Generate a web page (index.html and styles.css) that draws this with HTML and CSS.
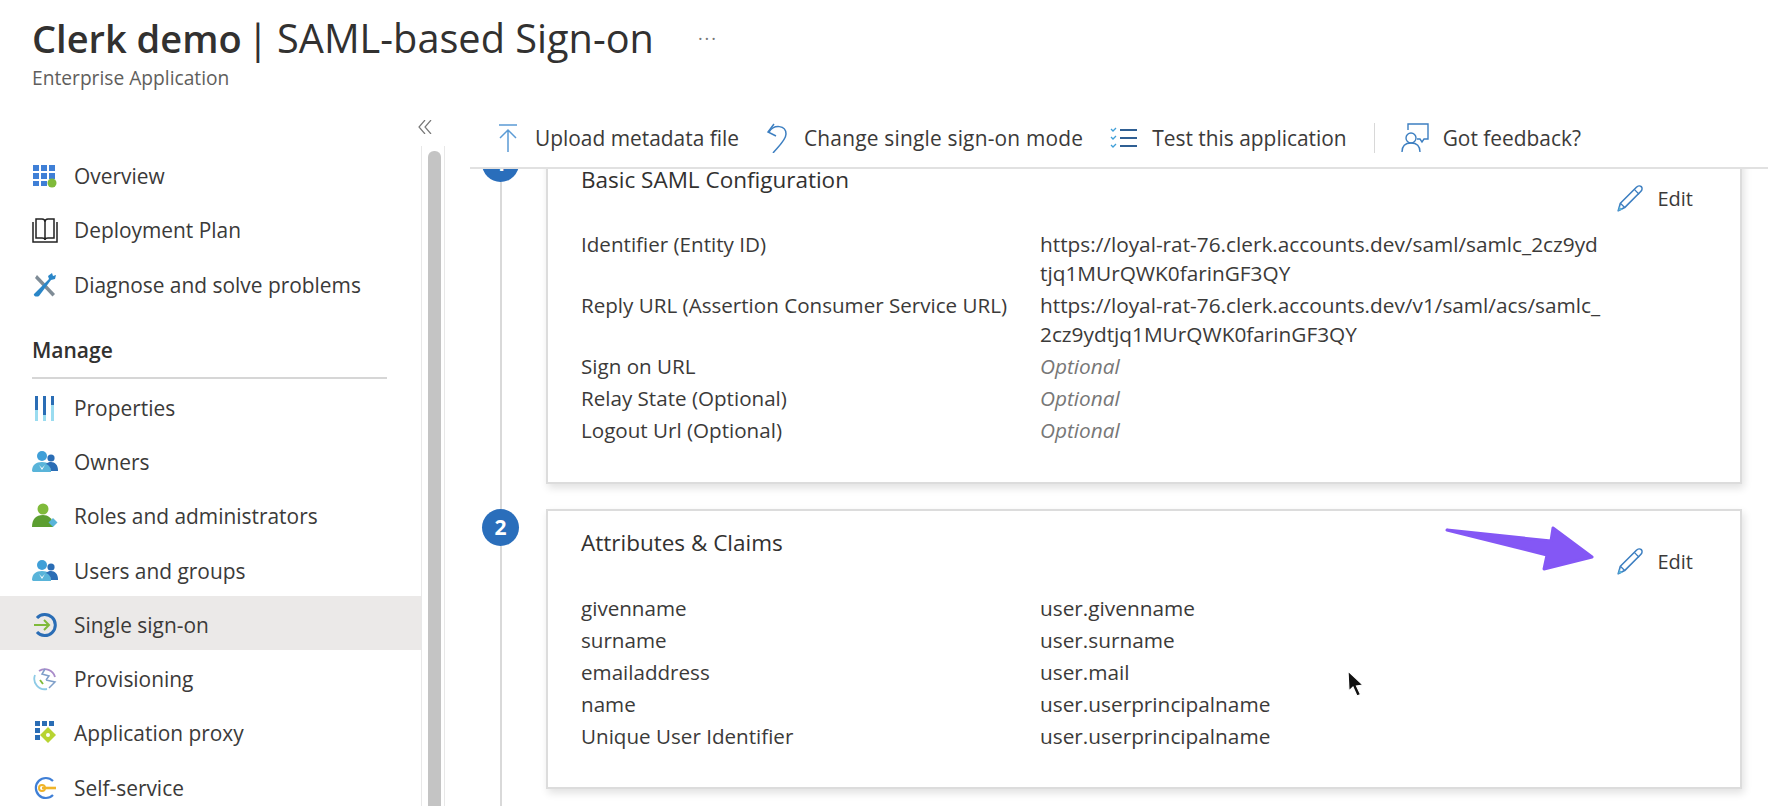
FILE: index.html
```html
<!DOCTYPE html>
<html lang="en">
<head>
  <meta charset="UTF-8" />
  <meta name="viewport" content="width=device-width, initial-scale=1" />
  <title>Clerk demo | SAML-based Sign-on</title>
  <link rel="stylesheet" href="styles.css">
</head>
<body>

  <!-- Icons used more than once -->
  <svg class="icon-defs" aria-hidden="true">
    <symbol id="icon-users" viewBox="0 0 26 24">
      <circle cx="10" cy="6" r="5" fill="#3f9fd8"/>
      <path d="M0 21c0-6 4-9 10-9s9 3 9 9v1H1z" fill="#59b4d9"/>
      <circle cx="19" cy="8" r="3.6" fill="#2a6db5"/>
      <path d="M14 14c1.500-1.500 3-2 5-2 4 0 7 3 7 8v1h-7c0-3-2-6-5-7z" fill="#2a6db5"/>
      <path d="M7 15l3 3 3-3-3 5z" fill="#fff"/>
    </symbol>
    <symbol id="icon-pencil" viewBox="0 0 28 28">
      <path d="M3 25l2-7L20 3c1.500-1.500 3.500-1.500 4.500-.5s1 3-.5 4.500L9 22z" fill="none" stroke="#3d7fc1" stroke-width="1.500" stroke-linejoin="round"/>
      <path d="M5 18l4 4M18 5l4.500 4.500" fill="none" stroke="#3d7fc1" stroke-width="1.200"/>
      <path d="M3 25l1-4 3 3z" fill="#59b4d9"/>
    </symbol>
  </svg>

  <header class="page-head">
    <div class="title-row">
      <h1><b>Clerk demo</b> <span class="bar">|</span> SAML-based Sign-on</h1>
      <span class="more">···</span>
    </div>
    <p class="subtitle">Enterprise Application</p>
  </header>

  <div class="layout">
    <aside class="sidebar">
      <div class="collapse-row">
        <svg class="collapse" viewBox="0 0 14 14" fill="none" stroke="#777" stroke-width="1.200">
          <path d="M7 0L1 7l6 7M13 0L7 7l6 7"/>
        </svg>
      </div>
      <div class="sidebar-body">
        <nav class="side-nav">
          <a class="nav-item">
            <svg class="nav-icon" viewBox="0 0 26 26">
              <g fill="#3f7fd6">
                <rect x="1" y="2" width="6" height="6"/><rect x="9" y="2" width="6" height="6"/><rect x="17" y="2" width="6" height="6"/>
                <rect x="1" y="10" width="6" height="6"/><rect x="9" y="10" width="6" height="6"/><rect x="17" y="10" width="6" height="6"/>
                <rect x="1" y="18" width="6" height="5"/><rect x="9" y="18" width="6" height="5"/>
              </g>
              <circle cx="20" cy="20" r="4.500" fill="#7fba3a"/>
            </svg>
            Overview
          </a>
          <a class="nav-item">
            <svg class="nav-icon" viewBox="0 0 26 26" fill="none" stroke="#222" stroke-width="1.500">
              <path d="M1 5v20h24V5"/>
              <path d="M4 2h6c2 0 3 1 3 3v18c0-1-1-2-3-2H4zM22 2h-6c-2 0-3 1-3 3v18c0-1 1-2 3-2h6z"/>
            </svg>
            Deployment Plan
          </a>
          <a class="nav-item">
            <svg class="nav-icon" viewBox="0 0 26 26">
              <path d="M5 3l18 19-2.500 2.500L3 6z" fill="#7f8c96"/>
              <path d="M2 22L17 7l-1-3 4-3 1 3 3-1-1 4-4 1L7 24c-2 1.500-6 0-5-2z" fill="#2a86c8"/>
            </svg>
            Diagnose and solve problems
          </a>

          <h2 class="nav-heading">Manage</h2>

          <a class="nav-item">
            <svg class="nav-icon" viewBox="0 0 26 26">
              <g fill="#9adcf0"><rect x="3" y="1" width="3" height="25"/><rect x="11" y="1" width="3" height="25"/><rect x="19" y="1" width="3" height="25"/></g>
              <g fill="#2a6db5"><rect x="3" y="1" width="3" height="14"/><rect x="11" y="1" width="3" height="19"/><rect x="19" y="1" width="3" height="9"/></g>
            </svg>
            Properties
          </a>
          <a class="nav-item">
            <svg class="nav-icon"><use href="#icon-users"/></svg>
            Owners
          </a>
          <a class="nav-item">
            <svg class="nav-icon" viewBox="0 0 26 26">
              <circle cx="11" cy="6" r="5.500" fill="#7fba3a"/>
              <path d="M0 24c0-8 4-12 11-12 5 0 9 3 10 8v4z" fill="#5c9e31"/>
              <path d="M21 15l4.500 4.500L21 24l-4.500-4.500z" fill="#59b4d9"/>
            </svg>
            Roles and administrators
          </a>
          <a class="nav-item">
            <svg class="nav-icon"><use href="#icon-users"/></svg>
            Users and groups
          </a>
          <a class="nav-item is-active">
            <svg class="nav-icon" viewBox="0 0 26 26" fill="none">
              <path d="M5 6a10.500 10.500 0 1 1 0 14" stroke="#2a6db5" stroke-width="3"/>
              <path d="M2 13h15M12 8l5 5-5 5" stroke="#7fba3a" stroke-width="2"/>
            </svg>
            Single sign-on
          </a>
          <a class="nav-item">
            <svg class="nav-icon" viewBox="0 0 26 26" fill="none" stroke-width="1.800">
              <path d="M7 5a10.500 10.500 0 0 1 16 6" stroke="#a98bc9"/>
              <path d="M3 9a10.500 10.500 0 0 0 12 14" stroke="#8ecbe6"/>
              <path d="M13 3l-3 5 7 2-3 4M17 22l6-6-9-2" stroke="#7f9fc9" stroke-width="1.500"/>
              <path d="M8 14l3 4" stroke="#7fba3a" stroke-width="1.800"/>
            </svg>
            Provisioning
          </a>
          <a class="nav-item">
            <svg class="nav-icon" viewBox="0 0 26 26">
              <g fill="#2a6db5">
                <rect x="3" y="1" width="5" height="5"/><rect x="10" y="1" width="5" height="5"/><rect x="17" y="1" width="5" height="5"/>
                <rect x="3" y="8" width="5" height="5"/><rect x="3" y="15" width="5" height="5"/>
              </g>
              <path d="M16 7l8 8-8 8-8-8z" fill="#b8d432"/>
              <circle cx="16" cy="15" r="2" fill="#fff"/>
            </svg>
            Application proxy
          </a>
          <a class="nav-item">
            <svg class="nav-icon" viewBox="0 0 26 26" fill="none">
              <path d="M21 6a10 10 0 1 0 0 14" stroke="#3f7fd6" stroke-width="2.200"/>
              <path d="M10 13h14" stroke="#f0b429" stroke-width="2.600"/>
              <circle cx="10" cy="13" r="3" stroke="#f0b429" stroke-width="2"/>
            </svg>
            Self-service
          </a>
        </nav>
        <div class="scrollbar"><div class="scroll-thumb"></div></div>
      </div>
    </aside>

    <main class="content">
      <div class="toolbar">
        <a class="tool">
          <svg class="tool-icon" viewBox="0 0 22 30" fill="none" stroke="#5b9bd5" stroke-width="1.500">
            <path d="M2 2h18M11 29V8M3 15l8-8 8 8"/>
          </svg>
          Upload metadata file
        </a>
        <a class="tool tool-spaced">
          <svg class="tool-icon" viewBox="0 0 22 30" fill="none" stroke="#3d7fc1" stroke-width="1.500">
            <path d="M3 9C8 1 20 2 20 11c0 6-8 13-13 19"/>
            <path d="M8 1L2 9l8 4"/>
          </svg>
          Change single sign-on mode
        </a>
        <a class="tool tool-tight">
          <svg class="tool-icon wide" viewBox="0 0 28 24" fill="none" stroke-width="1.800">
            <path d="M10 4h17M10 12h17M10 20h17" stroke="#2f5f93"/>
            <path d="M1 3l2 2 3-3M1 11l2 2 3-3M1 19l2 2 3-3" stroke="#3f9fd8" stroke-width="1.300"/>
          </svg>
          Test this application
        </a>
        <span class="tool-sep"></span>
        <a class="tool tool-tight">
          <svg class="tool-icon wide" viewBox="0 0 28 30" fill="none" stroke="#3d7fc1" stroke-width="1.400">
            <path d="M7 7V1h20v15h-4l-2 3-2-3h-3"/>
            <circle cx="10" cy="15" r="5"/>
            <path d="M1 29c0-6 3-9 9-9s9 3 9 9"/>
          </svg>
          Got feedback?
        </a>
      </div>

      <div class="scroll-area">
        <div class="steps">

          <section class="step">
            <div class="step-rail"><span class="step-num">1</span></div>
            <div class="card card-saml">
              <div class="card-head">
                <h3>Basic SAML Configuration</h3>
                <a class="edit"><svg class="edit-icon"><use href="#icon-pencil"/></svg>Edit</a>
              </div>
              <dl class="fields">
                <dt>Identifier (Entity ID)</dt>
                <dd>https://loyal-rat-76.clerk.accounts.dev/saml/samlc_2cz9yd<br>tjq1MUrQWK0farinGF3QY</dd>
                <dt>Reply URL (Assertion Consumer Service URL)</dt>
                <dd>https://loyal-rat-76.clerk.accounts.dev/v1/saml/acs/samlc_<br>2cz9ydtjq1MUrQWK0farinGF3QY</dd>
                <dt>Sign on URL</dt>
                <dd class="optional">Optional</dd>
                <dt>Relay State (Optional)</dt>
                <dd class="optional">Optional</dd>
                <dt>Logout Url (Optional)</dt>
                <dd class="optional">Optional</dd>
              </dl>
            </div>
          </section>

          <section class="step">
            <div class="step-rail"><span class="step-num">2</span></div>
            <div class="card">
              <div class="card-head">
                <h3>Attributes &amp; Claims</h3>
                <a class="edit"><svg class="edit-icon"><use href="#icon-pencil"/></svg>Edit</a>
              </div>
              <dl class="fields">
                <dt>givenname</dt><dd>user.givenname</dd>
                <dt>surname</dt><dd>user.surname</dd>
                <dt>emailaddress</dt><dd>user.mail</dd>
                <dt>name</dt><dd>user.userprincipalname</dd>
                <dt>Unique User Identifier</dt><dd>user.userprincipalname</dd>
              </dl>

              <!-- Annotation and pointer captured on top of the card -->
              <svg class="annot-arrow" viewBox="0 0 150 46">
                <path d="M2 4L106 15 108 2 147 31 99 43 102 29z" fill="#8457f5" stroke="#8457f5" stroke-width="3" stroke-linejoin="round"/>
              </svg>
              <svg class="cursor" viewBox="0 0 18 28">
                <path d="M2 1l1 20 4-4 4 9 3.500-1.500-4-8.500 6.500-1z" fill="#111" stroke="#fff" stroke-width="1.200"/>
              </svg>
            </div>
          </section>

        </div>
      </div>
    </main>
  </div>

</body>
</html>
```

FILE: styles.css
```css
body {
  font-family: 'Open Sans', 'Noto Sans', sans-serif;
  color: #3b3a39;
  background-color: white;
  margin: 0;
  height: 806px;
  overflow: hidden;
  display: flex;
  flex-direction: column;
}

.icon-defs {
  display: none;
}

/* Page title */
.page-head {
  height: 108px;
  padding: 14px 32px 0;
  box-sizing: border-box;
  flex-shrink: 0;
}

.title-row {
  display: flex;
  align-items: center;
  gap: 44px;
}

.title-row h1 {
  margin: 0;
  font-size: 39.7px;
  line-height: 48px;
  font-weight: 400;
  color: #323130;
  white-space: nowrap;
}

.title-row h1 b {
  font-size: 38px;
  font-weight: 600;
}

.bar {
  margin: 0 -2px 0 -5px;
}

.more {
  font-size: 18px;
  letter-spacing: 2px;
  color: #777;
}

.subtitle {
  margin: 4px 0 0;
  font-size: 19.2px;
  line-height: 24px;
  color: #605e5c;
}

.layout {
  flex: 1;
  display: flex;
  min-height: 0;
}

/* Left blade menu */
.sidebar {
  width: 445px;
  flex-shrink: 0;
  display: flex;
  flex-direction: column;
}

.collapse-row {
  height: 38px;
  display: flex;
  justify-content: flex-end;
  padding: 12px 13px 0 0;
  box-sizing: border-box;
}

.collapse {
  width: 14px;
  height: 14px;
}

.sidebar-body {
  flex: 1;
  display: flex;
  min-height: 0;
}

.side-nav {
  width: 421px;
  flex-shrink: 0;
  padding-top: 1px;
}

.nav-item {
  height: 54.25px;
  box-sizing: border-box;
  padding: 4px 0 0 32px;
  display: flex;
  align-items: center;
  gap: 16px;
  font-size: 20.9px;
  color: #3b3a39;
  white-space: nowrap;
}

.nav-item.is-active {
  background-color: #ebe9e8;
}

.nav-icon {
  width: 26px;
  height: 26px;
  flex-shrink: 0;
}

.nav-heading {
  margin: 2px 34px 0 32px;
  height: 67px;
  padding-top: 24px;
  box-sizing: border-box;
  border-bottom: 2px solid #d6d6d6;
  font-size: 21px;
  line-height: 28px;
  font-weight: 600;
  color: #323130;
}

.scrollbar {
  width: 24px;
  flex-shrink: 0;
  box-sizing: border-box;
  padding: 5px 3px 0 6px;
  border-left: 1px solid #e8e8e8;
  border-right: 1px solid #e8e8e8;
}

.scroll-thumb {
  height: 100%;
  background-color: #c4c4c4;
  border-radius: 6px 6px 0 0;
}

/* Main column */
.content {
  flex: 1;
  min-width: 0;
  display: flex;
  flex-direction: column;
}

.toolbar {
  height: 61px;
  flex-shrink: 0;
  position: relative;
  z-index: 1;
  box-sizing: border-box;
  background-color: white;
  border-bottom: 2px solid #e1e1e1;
  margin-left: 25px;
  padding: 0 0 0 27px;
  display: flex;
  align-items: center;
  font-size: 20.9px;
  color: #3b3a39;
  white-space: nowrap;
}

.tool {
  display: flex;
  align-items: center;
  gap: 16px;
  margin-right: 27px;
}

.tool-spaced {
  letter-spacing: 0.2px;
}

.tool-tight {
  gap: 14px;
}

.tool-icon {
  width: 22px;
  height: 30px;
  flex-shrink: 0;
}

.tool-icon.wide {
  width: 28px;
}

.tool-sep {
  width: 1px;
  height: 30px;
  background-color: #d8d8d8;
  margin-right: 26px;
}

.scroll-area {
  flex: 1;
  min-height: 0;
  overflow: hidden;
}

/* The list is scrolled, so the first card starts under the toolbar */
.steps {
  margin-top: -24px;
  padding: 0 26px 0 37px;
}

.step {
  display: flex;
  gap: 27px;
  padding-bottom: 25px;
}

.step-rail {
  width: 37px;
  flex-shrink: 0;
  display: flex;
  flex-direction: column;
  align-items: center;
}

.step-rail::after {
  content: "";
  flex: 1;
  width: 2px;
  margin-bottom: -25px;
  background-color: #d9d9d9;
}

.step-num {
  width: 37px;
  height: 37px;
  flex-shrink: 0;
  border-radius: 50%;
  background-color: #2a6ebb;
  color: white;
  font-size: 21px;
  font-weight: 700;
  line-height: 37px;
  text-align: center;
}

.card {
  flex: 1;
  position: relative;
  box-sizing: border-box;
  padding: 18px 47px 36px 33px;
  border: 2px solid #dcdcdc;
  box-shadow: 2px 4px 8px rgba(0,0,0,0.12);
}

.card-saml {
  padding-top: 19px;
  padding-bottom: 37px;
}

.card-head {
  display: flex;
  justify-content: space-between;
  align-items: flex-start;
  margin-bottom: 17px;
}

.card-saml .card-head {
  margin-bottom: 16px;
}

.card-head h3 {
  margin: 0;
  font-size: 22.5px;
  line-height: 28px;
  font-weight: 400;
  color: #323130;
}

.edit {
  margin-top: 18px;
  display: flex;
  align-items: center;
  gap: 12px;
  font-size: 20px;
  line-height: 28px;
}

.edit-icon {
  width: 30px;
  height: 30px;
}

.fields {
  margin: 0;
  display: grid;
  grid-template-columns: 459px 1fr;
  row-gap: 3px;
  font-size: 20.8px;
  line-height: 29px;
  white-space: nowrap;
}

.fields dt {
  margin: 0;
  font-size: 20.6px;
}

.fields dd {
  margin: 0;
}

.fields .optional {
  font-style: italic;
  color: #777;
}

.annot-arrow {
  position: absolute;
  left: 897px;
  top: 15px;
  width: 150px;
  height: 46px;
}

.cursor {
  position: absolute;
  left: 798px;
  top: 159px;
  width: 18px;
  height: 28px;
}
```
